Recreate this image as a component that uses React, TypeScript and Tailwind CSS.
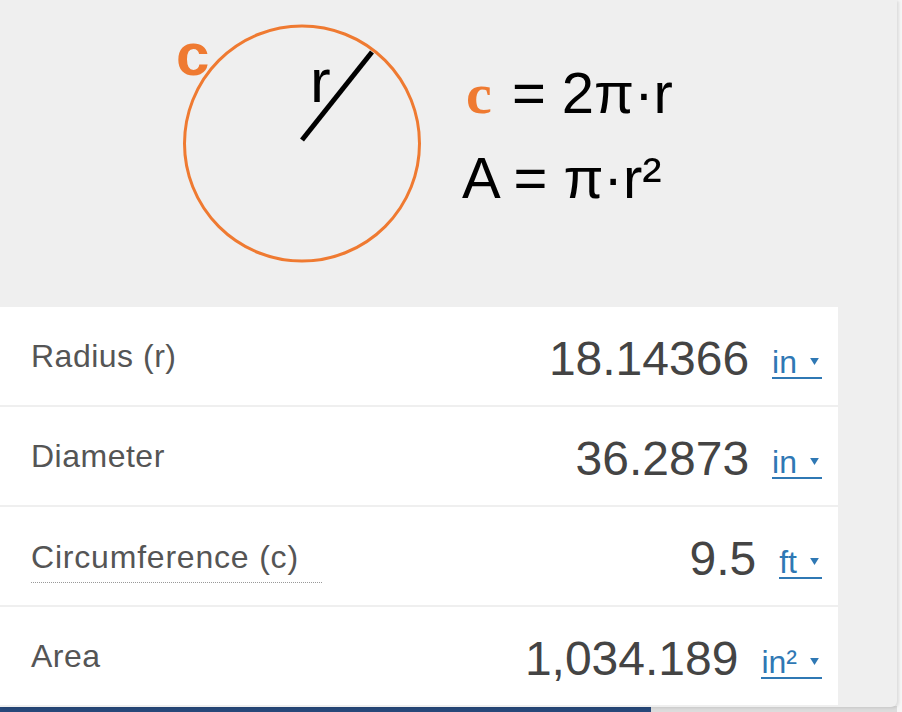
const rows = [
  { label: 'Radius (r)', value: '18.14366', unit: 'in', dotted: false },
  { label: 'Diameter', value: '36.2873', unit: 'in', dotted: false },
  { label: 'Circumference (c)', value: '9.5', unit: 'ft', dotted: true },
  { label: 'Area', value: '1,034.189', unit: 'in²', dotted: false },
]

function Caret() {
  return (
    <svg viewBox="0 0 10 8" className="ml-[13px] h-[7px] w-[9px] self-center">
      <polygon points="0,0 10,0 5,8" fill="#2f78b4" />
    </svg>
  )
}

function CircleDiagram() {
  return (
    <svg width="260" height="250" viewBox="0 0 260 250" className="shrink-0">
      <circle cx="132" cy="123.5" r="117.5" fill="none" stroke="#ef7a31" strokeWidth="3" />
      <line x1="132" y1="120" x2="202" y2="32" stroke="#000" strokeWidth="5" />
      <text
        x="140"
        y="82"
        fontSize="62"
        fill="#000"
        style={{ fontFamily: '"Liberation Sans", Arial, sans-serif' }}
      >
        r
      </text>
      <text
        x="6"
        y="55"
        fontSize="60"
        fontWeight="bold"
        fill="#ef7a31"
        style={{ fontFamily: '"Liberation Sans", Arial, sans-serif' }}
      >
        c
      </text>
    </svg>
  )
}

export default function App() {
  return (
    <div
      className="flex h-[712px] w-[902px] flex-col overflow-hidden bg-[#f6f6f6]"
      style={{ fontFamily: '"Liberation Sans", Arial, sans-serif' }}
    >
      <div className="relative z-10 flex h-[707px] w-[897px] flex-col rounded-br-[6px] bg-[#efefef] shadow-[2px_1px_3px_rgba(0,0,0,0.10)]">
        {/* diagram + formulas */}
        <div className="flex h-[307px] pl-[170px] pt-[20px]">
          <CircleDiagram />
          <div className="ml-[32px] mt-[31px] text-[58px] leading-[84px] text-black">
            <div className="pl-[4px]">
              <span className="mr-[4px] font-bold text-[#ef7a31]" style={{ fontFamily: '"Liberation Serif", "Times New Roman", serif' }}>
                c
              </span>{' '}
              = 2π·r
            </div>
            <div>A = π·r²</div>
          </div>
        </div>

        {/* result table */}
        <div className="flex w-[838px] flex-col gap-[2px]">
          {rows.map((r) => (
            <div key={r.label} className="flex h-[98px] items-center justify-between bg-white pl-[31px] pr-[16px]">
              <span
                className={
                  r.dotted
                    ? 'mt-[12px] border-b border-dotted border-[#999] pb-[9px] pr-[23px] text-[32px] leading-none tracking-[0.8px] text-[#555]'
                    : 'text-[32px] leading-none tracking-[0.5px] text-[#555]'
                }
              >
                {r.label}
              </span>
              <div className="mt-[5px] flex items-end">
                <span className="text-[48px] leading-none text-[#444]">{r.value}</span>
                <span className="mb-[4px] ml-[23px] flex items-baseline border-b-2 border-[#2f78b4] pr-[3px] text-[32px] leading-[30px] text-[#2f78b4]">
                  {r.unit}
                  <Caret />
                </span>
              </div>
            </div>
          ))}
        </div>
      </div>
      <div className="-mt-[1px] flex h-[6px]">
        <div className="h-full w-[651px] bg-[#27487a]" />
        <div className="h-full w-[246px] bg-[#dcdcdc]" />
      </div>
    </div>
  )
}
